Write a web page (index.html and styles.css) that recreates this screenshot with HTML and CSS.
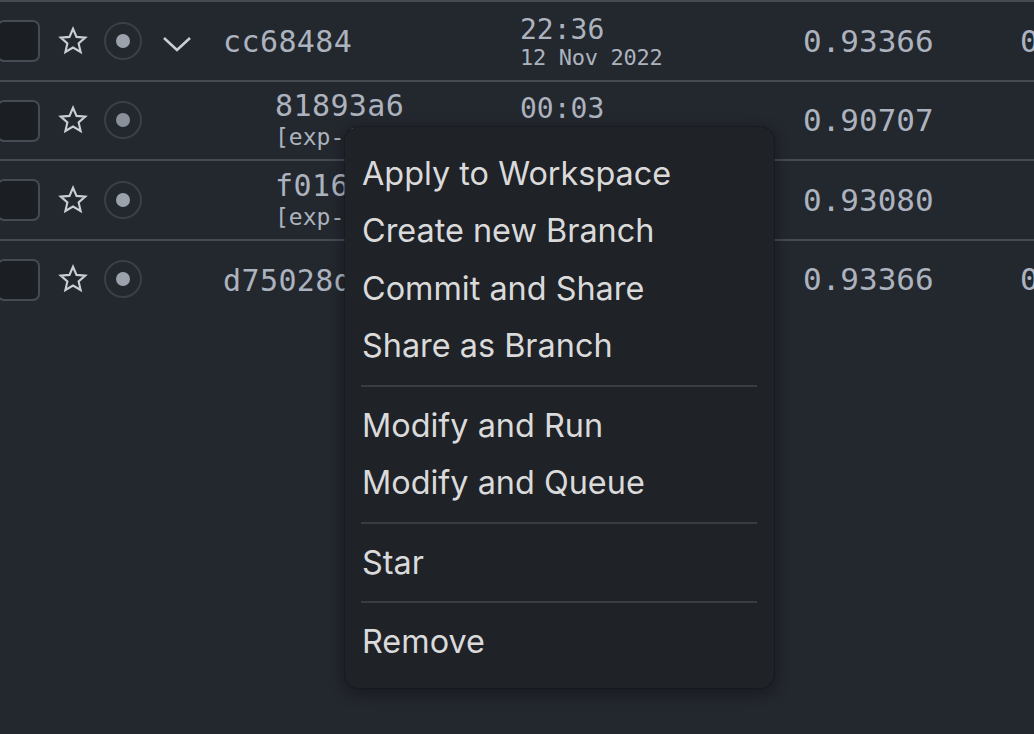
FILE: index.html
```html
<!DOCTYPE html>
<html>
<head>
<meta charset="utf-8">
<link rel="stylesheet" href="styles.css">
</head>
<body>
<div class="table">
  <div class="row">
    <div class="c-check"><span class="checkbox"></span></div>
    <div class="c-star"><svg class="star" viewBox="0 0 24 24"><polygon points="12,2.2 14.8,8.7 21.8,9.3 16.5,13.9 18.1,20.8 12,17.2 5.9,20.8 7.5,13.9 2.2,9.3 9.2,8.7"/></svg></div>
    <div class="c-dot"><span class="ring"><span class="dot"></span></span></div>
    <div class="c-chev"><svg class="chev" viewBox="0 0 30 18"><polyline points="2,3 15,15 28,3"/></svg></div>
    <div class="c-id"><div class="id single">cc68484</div></div>
    <div class="c-time"><div class="time">22:36</div><div class="date">12 Nov 2022</div></div>
    <div class="c-val">0.93366</div>
    <div class="c-val">0.93366</div>
  </div>
  <div class="row">
    <div class="c-check"><span class="checkbox"></span></div>
    <div class="c-star"><svg class="star" viewBox="0 0 24 24"><polygon points="12,2.2 14.8,8.7 21.8,9.3 16.5,13.9 18.1,20.8 12,17.2 5.9,20.8 7.5,13.9 2.2,9.3 9.2,8.7"/></svg></div>
    <div class="c-dot"><span class="ring"><span class="dot dim"></span></span></div>
    <div class="c-chev"></div>
    <div class="c-id child"><div class="id">81893a6</div><div class="label">[exp-44136]</div></div>
    <div class="c-time"><div class="time">00:03</div><div class="date">13 Nov 2022</div></div>
    <div class="c-val">0.90707</div>
    <div class="c-val"></div>
  </div>
  <div class="row">
    <div class="c-check"><span class="checkbox"></span></div>
    <div class="c-star"><svg class="star" viewBox="0 0 24 24"><polygon points="12,2.2 14.8,8.7 21.8,9.3 16.5,13.9 18.1,20.8 12,17.2 5.9,20.8 7.5,13.9 2.2,9.3 9.2,8.7"/></svg></div>
    <div class="c-dot"><span class="ring"><span class="dot"></span></span></div>
    <div class="c-chev"></div>
    <div class="c-id child"><div class="id">f016b2e</div><div class="label">[exp-a2b7e]</div></div>
    <div class="c-time"><div class="time">00:04</div><div class="date">13 Nov 2022</div></div>
    <div class="c-val">0.93080</div>
    <div class="c-val"></div>
  </div>
  <div class="row">
    <div class="c-check"><span class="checkbox"></span></div>
    <div class="c-star"><svg class="star" viewBox="0 0 24 24"><polygon points="12,2.2 14.8,8.7 21.8,9.3 16.5,13.9 18.1,20.8 12,17.2 5.9,20.8 7.5,13.9 2.2,9.3 9.2,8.7"/></svg></div>
    <div class="c-dot"><span class="ring"><span class="dot"></span></span></div>
    <div class="c-chev"></div>
    <div class="c-id"><div class="id single">d75028d</div></div>
    <div class="c-time"><div class="time">22:36</div><div class="date">12 Nov 2022</div></div>
    <div class="c-val">0.93366</div>
    <div class="c-val">0.93366</div>
  </div>
</div>

<div class="menu">
  <div class="item">Apply to Workspace</div>
  <div class="item">Create new Branch</div>
  <div class="item">Commit and Share</div>
  <div class="item">Share as Branch</div>
  <div class="sep"></div>
  <div class="item">Modify and Run</div>
  <div class="item">Modify and Queue</div>
  <div class="sep"></div>
  <div class="item">Star</div>
  <div class="sep"></div>
  <div class="item">Remove</div>
</div>
</body>
</html>
```

FILE: styles.css
```css
html, body {
  margin: 0;
  padding: 0;
  background: #23272e;
  width: 1034px;
  height: 734px;
  overflow: hidden;
}

body {
  position: relative;
  font-family: "DejaVu Sans Mono", "Liberation Mono", monospace;
  color: #adb3be;
}

.table {
  margin-left: -3px;
  width: 1250px;
}

.row {
  display: grid;
  grid-template-columns: 54px 43px 58px 49px 319px 283px 217px 1fr;
  align-items: center;
  height: 77.5px;
  border-top: 2px solid #454a53;
}

.c-check {
  display: flex;
  align-items: center;
}

.checkbox {
  display: block;
  width: 39px;
  height: 38px;
  border: 2px solid #454a53;
  border-radius: 7px;
  background: #1b1e23;
  margin-top: 1px;
}

.c-star, .c-dot, .c-chev {
  display: flex;
  align-items: center;
  justify-content: center;
}

.star {
  width: 30px;
  height: 30px;
  fill: none;
  stroke: #c9ced6;
  stroke-width: 1.7;
  stroke-linejoin: miter;
}

.ring {
  display: flex;
  align-items: center;
  justify-content: center;
  width: 34px;
  height: 34px;
  border: 2px solid #3b4048;
  border-radius: 50%;
}

.dot {
  width: 14px;
  height: 14px;
  border-radius: 50%;
  background: #9ca2ac;
}

.dot.dim {
  background: #8a9099;
}

.chev {
  width: 30px;
  height: 18px;
  margin-top: 7px;
  fill: none;
  stroke: #c9ced6;
  stroke-width: 2.6;
}

.c-id {
  padding-left: 22px;
  white-space: nowrap;
}

.c-id.child {
  padding-left: 74px;
}

.id {
  font-size: 30px;
  line-height: 34px;
  letter-spacing: 0.4px;
}

.id.single {
  padding-top: 3px;
}

.label {
  font-size: 23px;
  line-height: 28px;
}

.c-time {
  padding-top: 4px;
  white-space: nowrap;
}

.time {
  font-size: 28px;
  line-height: 30px;
}

.date {
  font-size: 22px;
  line-height: 26px;
  letter-spacing: -0.3px;
}

.c-val {
  font-size: 31px;
  line-height: 36px;
  white-space: nowrap;
}

.menu {
  position: absolute;
  left: 345px;
  top: 127px;
  width: 429px;
  box-sizing: border-box;
  padding: 17.6px 0 17.5px 0;
  background: #1f2227;
  border-radius: 14px;
  box-shadow: 0 0 0 1px rgba(20, 22, 26, 0.5), 0 4px 16px rgba(0, 0, 0, 0.4);
  font-family: Inter, "Noto Sans", sans-serif;
  color: #dadadb;
}

.item {
  height: 57.5px;
  line-height: 57.5px;
  padding-left: 17px;
  font-size: 32.4px;
  white-space: nowrap;
}

.sep {
  height: 22px;
  display: flex;
  align-items: center;
  margin: 0 17px 0 16px;
}

.sep::before {
  content: "";
  display: block;
  width: 100%;
  height: 2px;
  background: #393c41;
}
```
